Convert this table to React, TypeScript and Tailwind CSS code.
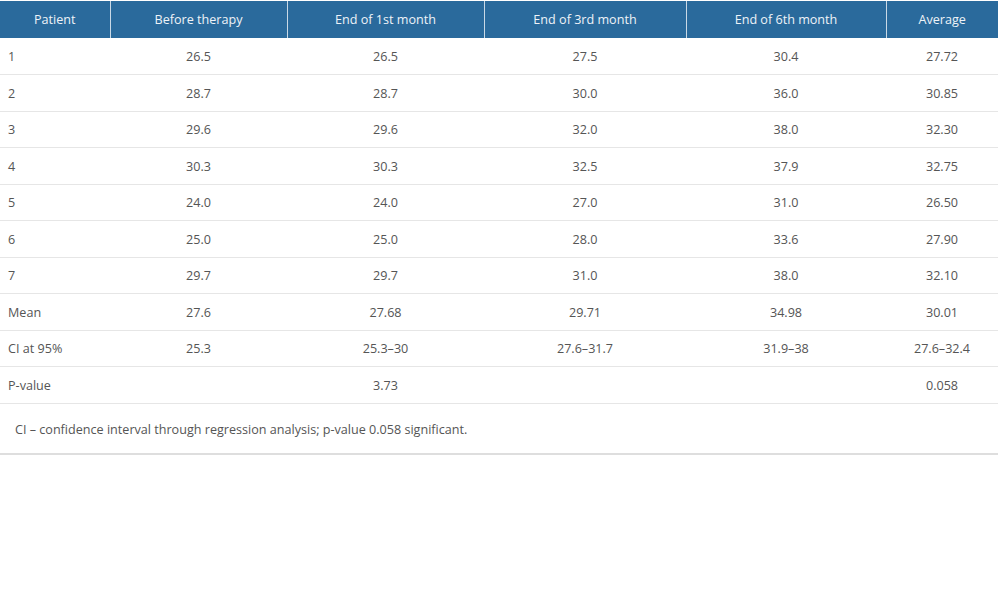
const headers = ['Patient', 'Before therapy', 'End of 1st month', 'End of 3rd month', 'End of 6th month', 'Average'];

const rows: string[][] = [
  ['1', '26.5', '26.5', '27.5', '30.4', '27.72'],
  ['2', '28.7', '28.7', '30.0', '36.0', '30.85'],
  ['3', '29.6', '29.6', '32.0', '38.0', '32.30'],
  ['4', '30.3', '30.3', '32.5', '37.9', '32.75'],
  ['5', '24.0', '24.0', '27.0', '31.0', '26.50'],
  ['6', '25.0', '25.0', '28.0', '33.6', '27.90'],
  ['7', '29.7', '29.7', '31.0', '38.0', '32.10'],
  ['Mean', '27.6', '27.68', '29.71', '34.98', '30.01'],
  ['CI at 95%', '25.3', '25.3–30', '27.6–31.7', '31.9–38', '27.6–32.4'],
  ['P-value', '', '3.73', '', '', '0.058'],
];

export default function App() {
  return (
    <div className="w-[1000px] h-[600px] bg-white font-['Open_Sans',sans-serif] text-[12.6px] text-[#555]">
      <div className="w-[998px] pt-px border-b-2 border-[#dedede]">
        <table className="w-full border-collapse table-fixed">
          <colgroup>
            <col className="w-[110px]" />
            <col className="w-[177px]" />
            <col className="w-[197px]" />
            <col className="w-[202px]" />
            <col className="w-[200px]" />
            <col />
          </colgroup>
          <thead>
            <tr className="bg-[#2a6a9c] text-[#eef3f8] h-[37px]">
              {headers.map((h, i) => (
                <th key={h} className={`font-normal text-center pt-[2px] ${i > 0 ? 'border-l border-[#c9d9e6]' : ''}`}>
                  {h}
                </th>
              ))}
            </tr>
          </thead>
          <tbody>
            {rows.map((r) => (
              <tr key={r[0]} className="h-[36.5px] border-b border-[#e6e6e6]">
                {r.map((c, i) => (
                  <td key={i} className={`pt-[3px] ${i === 0 ? 'pl-2 text-left' : 'text-center'}`}>
                    {c}
                  </td>
                ))}
              </tr>
            ))}
          </tbody>
        </table>
        <div className="h-[49px] flex items-center pl-[15px] pt-[5px]">
          CI – confidence interval through regression analysis; p-value 0.058 significant.
        </div>
      </div>
    </div>
  );
}
